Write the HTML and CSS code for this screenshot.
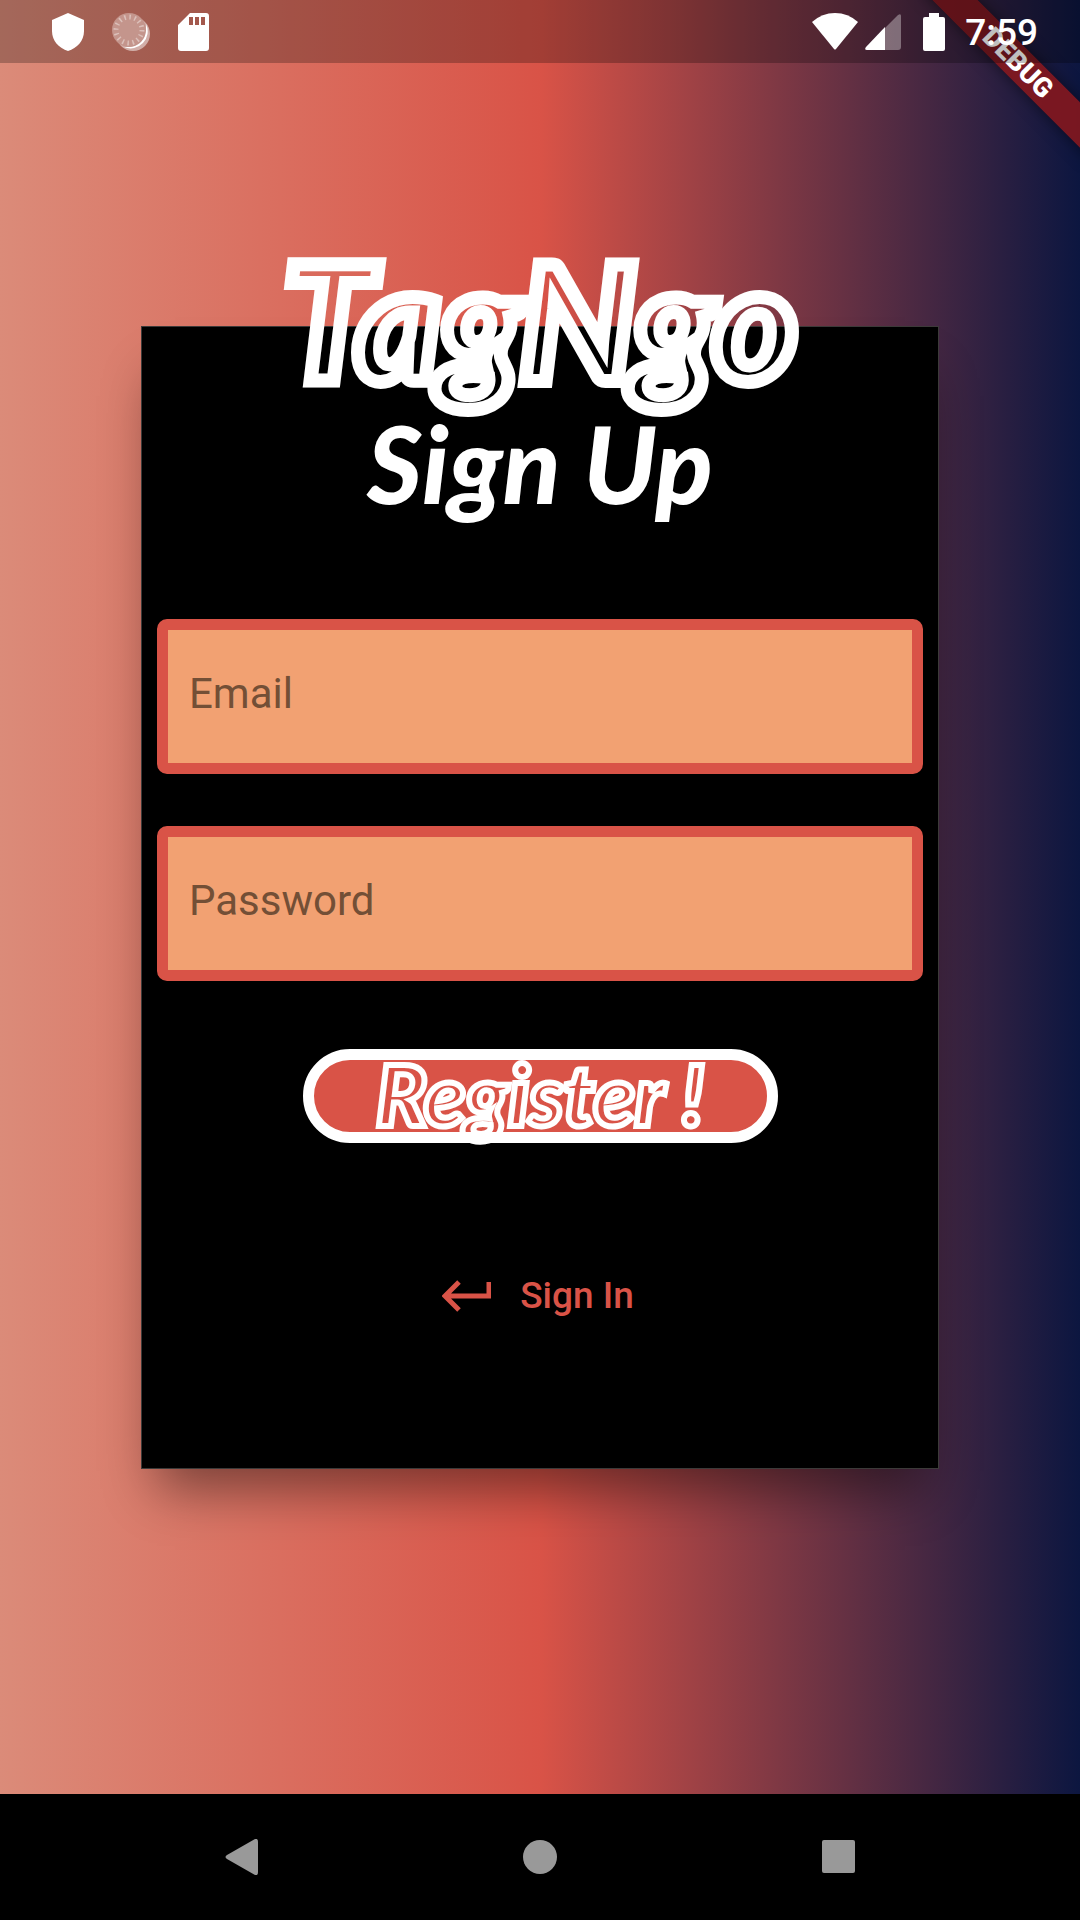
FILE: index.html
```html
<!DOCTYPE html>
<html lang="en">
<head>
<meta charset="utf-8">
<meta name="viewport" content="width=device-width, initial-scale=1">
<title>TagNgo – Sign Up</title>
<link rel="stylesheet" href="styles.css">
</head>
<body>
<div class="ribbon-corner"><span class="ribbon">DEBUG</span></div>
<header class="status">
  <div class="status-group notices">
    <svg width="32" height="38" viewBox="0 0 32 38" aria-hidden="true"><path d="M16 0 32 7V18C32 28 25 35 16 38 7 35 0 28 0 18V7Z" fill="#fff"/></svg>
    <svg width="38" height="38" viewBox="0 0 38 38" aria-hidden="true">
      <circle cx="21" cy="21" r="17" fill="#fff" opacity=".5"/>
      <path d="M34 11A17 17 0 0 1 12 34C25 35 35 26 34 11Z" fill="#fff"/>
      <circle cx="17" cy="17" r="17" fill="#c4958c"/>
      <circle cx="17" cy="17" r="13" fill="none" stroke="#dcc0ba" stroke-width="5" stroke-dasharray="1.5 3.605"/>
    </svg>
    <svg width="31" height="38" viewBox="0 0 31 38" aria-hidden="true"><path fill="#fff" fill-rule="evenodd" d="M12 0H28Q31 0 31 3V35Q31 38 28 38H3Q0 38 0 35V12ZM11 4V12H15V4ZM17 4V12H21V4ZM23 4V12H27V4Z"/></svg>
  </div>
  <div class="status-group signals">
    <svg width="46" height="37" viewBox="0 0 46 37" aria-hidden="true"><path d="M0 9Q10 0 23 0T46 9L24 36Q23 37 22 36Z" fill="#fff"/></svg>
    <svg width="36" height="37" viewBox="0 0 36 37" aria-hidden="true"><path d="M20 15 33 2Q36 0 36 3V34Q36 37 33 37H20Z" fill="#fff" opacity=".35"/><path d="M20 14V37H2Q-1 37 1 34Z" fill="#fff"/></svg>
    <svg class="battery" width="22" height="38" viewBox="0 0 22 38" aria-hidden="true"><path d="M6 0H16V4H20Q22 4 22 6V36Q22 38 20 38H2Q0 38 0 36V6Q0 4 2 4H6Z" fill="#fff"/></svg>
    <time class="clock">7:59</time>
  </div>
</header>
<main class="screen">
  <form class="card">
    <h1 class="logo">TagNgo</h1>
    <h2 class="title">Sign Up</h2>
    <input class="field" type="email" placeholder="Email" aria-label="Email">
    <input class="field" type="password" placeholder="Password" aria-label="Password">
    <button class="register" type="button">Register !</button>
    <a class="signin" href="#">
      <svg width="49" height="32" viewBox="0 0 49 32" aria-hidden="true"><path d="M17 2 3 16 17 30M3 16H47V2" fill="none" stroke="#d95347" stroke-width="5"/></svg>
      <span>Sign In</span>
    </a>
  </form>
</main>
<nav class="navbar">
  <button class="nav-button" type="button" aria-label="Back"><svg width="36" height="36" viewBox="0 0 36 36"><path d="M31 0Q34 -1 34 3V33Q34 37 31 36L3 20Q0 18 3 16Z" fill="#999"/></svg></button>
  <button class="nav-button" type="button" aria-label="Home"><svg width="36" height="36" viewBox="0 0 36 36"><circle cx="18" cy="18" r="17" fill="#999"/></svg></button>
  <button class="nav-button" type="button" aria-label="Recents"><svg width="36" height="36" viewBox="0 0 36 36"><rect x="2" y="1" width="33" height="33" rx="2" fill="#999"/></svg></button>
</nav>
</body>
</html>
```
FILE: styles.css
```css
* {
  box-sizing: border-box;
}

body {
  margin: 0;
  min-height: 100vh;
  display: flex;
  flex-direction: column;
  position: relative;
  font-family: Roboto, sans-serif;
  background: linear-gradient(to right, #db8b79, #d95347 50%, #0c1640);
}

svg {
  display: block;
}

/* System status bar, drawn over the app */
.status {
  position: absolute;
  inset: 0 0 auto;
  height: 63px;
  padding: 0 42px 0 52px;
  display: flex;
  justify-content: space-between;
  align-items: center;
  background: rgba(0, 0, 0, 0.25);
  color: #fff;
}

.status-group {
  display: flex;
  align-items: center;
}

.notices {
  gap: 28px;
}

.signals {
  gap: 7px;
}

.battery {
  margin: 0 13px 0 15px;
}

.clock {
  font-size: 37px;
  font-weight: 500;
  line-height: 60px;
  padding-top: 3px;
}

/* Corner ribbon */
.ribbon-corner {
  position: absolute;
  top: 0;
  right: 0;
  width: 240px;
  height: 240px;
  overflow: hidden;
}

.ribbon {
  position: absolute;
  top: 47px;
  right: -58px;
  width: 240px;
  transform: rotate(45deg);
  background: rgba(140, 24, 28, 0.85);
  box-shadow: 0 0 16px rgba(0, 0, 0, 0.5);
  color: #fff;
  font-size: 27px;
  font-weight: 900;
  line-height: 32px;
  text-align: center;
}

.screen {
  flex: 1;
  display: flex;
  flex-direction: column;
  justify-content: center;
  padding: 0 141px;
}

.card {
  display: flex;
  flex-direction: column;
  align-items: center;
  padding: 0 15px 141px;
  border: 1px solid #3c3a39;
  background: #000;
  box-shadow: 0 36px 50px -16px rgba(0, 0, 0, 0.45);
}

.logo {
  margin: -88px 0 0;
  font-family: Lato, sans-serif;
  font-size: 160px;
  font-style: italic;
  font-weight: 900;
  line-height: 160px;
  color: transparent;
  -webkit-text-stroke: 14px #fff;
}

.title {
  margin: 0 0 92px;
  font-family: Lato, sans-serif;
  font-size: 106px;
  font-style: italic;
  font-weight: 900;
  line-height: 128px;
  color: #fff;
}

.field {
  width: 100%;
  height: 155px;
  margin-bottom: 52px;
  padding: 0 21px 6px;
  border: 11px solid #d95347;
  border-radius: 10px;
  background: #f2a172;
  color: #222;
  font: 42px Roboto, sans-serif;
}

.field::placeholder {
  color: #734f36;
  opacity: 1;
}

.register {
  width: 475px;
  height: 94px;
  margin-top: 16px;
  padding: 0 0 4px;
  border: 11px solid #fff;
  border-radius: 47px;
  background: #d95347;
  color: transparent;
  font-family: Lato, sans-serif;
  font-size: 84px;
  font-style: italic;
  font-weight: 900;
  line-height: 68px;
  -webkit-text-stroke: 6px #fff;
}

.signin {
  display: flex;
  align-items: center;
  gap: 29px;
  margin-top: 122px;
  padding-right: 4px;
  color: #d95347;
  font-size: 37px;
  font-weight: 500;
  line-height: 62px;
  text-decoration: none;
}

/* System navigation bar */
.navbar {
  height: 126px;
  padding: 0 93px;
  display: grid;
  grid-template-columns: repeat(3, 1fr);
  justify-items: center;
  align-items: center;
  background: #000;
}

.nav-button {
  padding: 0;
  border: 0;
  background: none;
}
```
